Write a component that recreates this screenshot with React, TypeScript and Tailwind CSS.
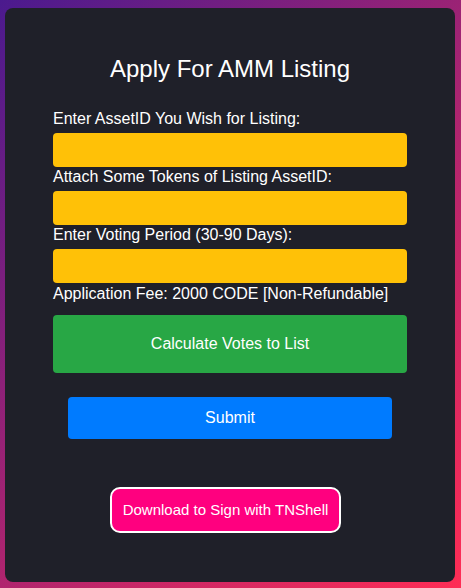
export default function App() {
  const labels = [
    "Enter AssetID You Wish for Listing:",
    "Attach Some Tokens of Listing AssetID:",
    "Enter Voting Period (30-90 Days):",
  ];

  return (
    <div
      className="flex min-h-screen flex-col bg-[linear-gradient(135deg,#4b1a8e,#ff2d55)] pt-[8px] pr-[6px] pb-[6px] pl-[5px] text-white"
      style={{ fontFamily: '"Liberation Sans", Arial, sans-serif' }}
    >
      <div className="flex flex-1 flex-col rounded-[8px] bg-[#1f2029] px-[48px] pt-[47px]">
        <h2 className="text-center text-[24px] leading-[27px] font-normal">
          Apply For AMM Listing
        </h2>

        <form className="mt-[28px] flex flex-col" onSubmit={(e) => e.preventDefault()}>
          {labels.map((label, i) => (
            <div key={label} className={i > 0 ? "mt-[1px]" : ""}>
              <label className="block text-[16px] leading-[18px]">{label}</label>
              <input
                type="text"
                className="mt-[5px] block h-[34px] w-full rounded-[4px] bg-[#ffc107] px-3 text-black outline-none"
              />
            </div>
          ))}

          <p className="mt-[2px] text-[16px] leading-[18px]">
            Application Fee: 2000 CODE [Non-Refundable]
          </p>

          <button
            type="button"
            className="mt-[12px] h-[58px] w-full rounded-[4px] bg-[#28a745] text-[16px]"
          >
            Calculate Votes to List
          </button>

          <button
            type="submit"
            className="mx-[15px] mt-[24px] h-[42px] rounded-[4px] bg-[#007bff] text-[16px]"
          >
            Submit
          </button>

          <button
            type="button"
            className="mt-[48px] ml-[57px] h-[46px] w-[231px] self-start rounded-[10px] border-2 border-white bg-[#ff007f] text-[15px]"
          >
            Download to Sign with TNShell
          </button>
        </form>
      </div>
    </div>
  );
}
